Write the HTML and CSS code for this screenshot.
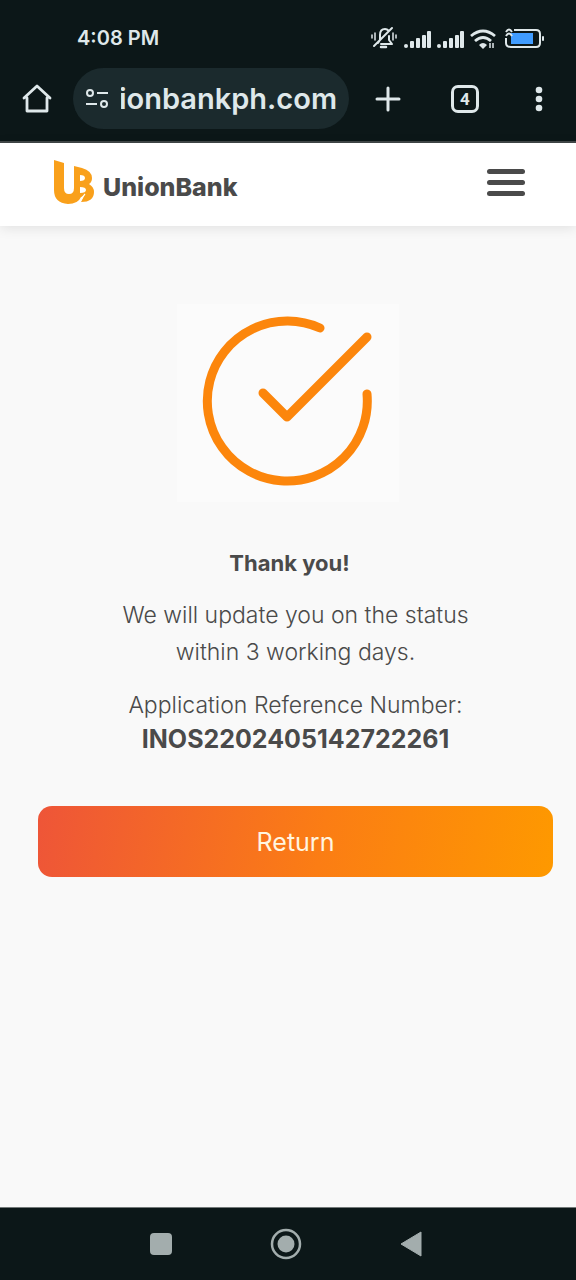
FILE: index.html
```html
<!DOCTYPE html>
<html lang="en">
<head>
<meta charset="utf-8">
<meta name="viewport" content="width=device-width, initial-scale=1">
<title>UnionBank</title>
<link rel="stylesheet" href="styles.css">
</head>
<body>
<div class="screen">
  <div class="system">
    <div class="status">
      <time class="clock">4:08 PM</time>
      <svg class="indicators" viewBox="0 0 176 24" aria-hidden="true">
        <g fill="none" stroke="currentColor" stroke-width="2" stroke-linecap="round" stroke-linejoin="round">
          <path d="M9 17l2-3V9c0-4 2-6 5-6 2 0 3 1 4 2M20 10v4l3 4H12M5 20L23 2"/>
          <path d="M12 21h5" stroke-width="2.500"/>
          <path d="M6 7v7M3 9v3M24 7v7M27 9v3" stroke-width="1.500"/>
        </g>
        <g fill="currentColor">
          <rect x="35" y="18" width="4" height="4" rx="2"/><rect x="41" y="15" width="4" height="7" rx="1"/><rect x="47" y="12" width="4" height="10" rx="1"/><rect x="53" y="9" width="4" height="13" rx="1"/><rect x="58" y="5" width="4" height="17" rx="1"/>
          <rect x="68" y="18" width="4" height="4" rx="2"/><rect x="74" y="15" width="4" height="7" rx="1"/><rect x="80" y="12" width="4" height="10" rx="1"/><rect x="86" y="9" width="4" height="13" rx="1"/><rect x="91" y="5" width="4" height="17" rx="1"/>
          <path d="M110 19q4-4 8 0l-4 4z"/>
        </g>
        <g fill="none" stroke="currentColor" stroke-width="2.800">
          <path d="M102 10q12-10 24 0M106 15q8-7 16 0"/>
          <path d="M121 17v5M124 17v5" stroke-width="1.500"/>
        </g>
        <rect x="142" y="7" width="22" height="11" fill="#409cff"/>
        <path d="M145 4h22q4 0 4 4v9q0 4-4 4h-25q-5 0-5-4v-5" fill="none" stroke="currentColor" stroke-width="2"/>
        <path d="M137 6q3-5 6 0M137 10q3-5 6 0" fill="none" stroke="currentColor" stroke-width="2"/>
        <rect x="173" y="10" width="2" height="5" rx="1" fill="currentColor"/>
      </svg>
    </div>
    <div class="toolbar">
      <button class="tool" type="button" aria-label="Home">
        <svg class="icon-home" viewBox="0 0 30 30"><path d="M5 14v13h20V14M2 14L15 2l13 12" fill="none" stroke="currentColor" stroke-width="2.800" stroke-linejoin="round" stroke-linecap="round"/></svg>
      </button>
      <div class="address">
        <svg class="icon-site" viewBox="0 0 24 20" aria-hidden="true"><g fill="none" stroke="currentColor" stroke-width="2"><circle cx="5" cy="4" r="3"/><circle cx="19" cy="15" r="3"/><path d="M12 4h11M1 15h11"/></g></svg>
        <input class="url" type="text" aria-label="Address" value="unionbankph.com">
      </div>
      <button class="tool" type="button" aria-label="New tab">
        <svg class="icon-plus" viewBox="0 0 26 26"><path d="M13 2v22M2 13h22" stroke="currentColor" stroke-width="3" stroke-linecap="round"/></svg>
      </button>
      <button class="tool tabs" type="button" aria-label="Tabs, 4 open"><span class="tab-count">4</span></button>
      <button class="tool" type="button" aria-label="More">
        <svg class="icon-more" viewBox="0 0 8 26"><g fill="currentColor"><circle cx="4" cy="4" r="3.300"/><circle cx="4" cy="13" r="3.300"/><circle cx="4" cy="22" r="3.300"/></g></svg>
      </button>
    </div>
  </div>

  <header class="site-header">
    <a class="brand" href="#">
      <svg class="brand-mark" viewBox="0 0 40 45" aria-hidden="true">
        <path fill="#f9a01b" d="M0 0l10 3v25q0 6 5 6t5-6V6l8 2q10 3 10 10 0 4-3 6 5 3 5 8 0 10-13 10l3-6-3 1Q24 44 14 44 0 43 0 30z"/>
        <path d="M26 15v6q5 0 5-3t-5-3zM26 27v6q6 0 6-3t-6-3z" fill="#fff"/>
        <path d="M31 34q-3 3-5 8" fill="none" stroke="#fff" stroke-width="1.200"/>
      </svg>
      <span class="brand-name">UnionBank</span>
    </a>
    <button class="menu" type="button" aria-label="Menu"><span class="bar"></span><span class="bar"></span><span class="bar"></span></button>
  </header>

  <main class="content">
    <div class="picture">
      <svg class="check" viewBox="0 0 222 198" role="img" aria-label="Submitted">
        <g fill="none" stroke="#fc860c" stroke-width="9" stroke-linecap="round" stroke-linejoin="round"><path d="M143 24A80 80 0 1 0 190 90"/><path d="M86 89L110 113 190 33"/></g>
      </svg>
    </div>
    <h1 class="title">Thank you!</h1>
    <p class="message">We will update you on the status<br>within 3 working days.</p>
    <p class="label">Application Reference Number:</p>
    <p class="reference">INOS2202405142722261</p>
    <button class="return" type="button">Return</button>
  </main>

  <nav class="navigation" aria-label="System">
    <button class="key" type="button" aria-label="Recent apps"><svg class="key-icon" viewBox="0 0 32 32"><rect x="5" y="5" width="22" height="22" rx="4" fill="currentColor"/></svg></button>
    <button class="key" type="button" aria-label="Home screen"><svg class="key-icon" viewBox="0 0 32 32"><circle cx="16" cy="16" r="14" fill="none" stroke="currentColor" stroke-width="2.500"/><circle cx="16" cy="16" r="8.500" fill="currentColor"/></svg></button>
    <button class="key" type="button" aria-label="Back"><svg class="key-icon" viewBox="0 0 32 32"><path d="M6 16L26 4v24z" fill="currentColor" stroke="currentColor" stroke-linejoin="round"/></svg></button>
  </nav>
</div>
</body>
</html>
```
FILE: styles.css
```css
* { box-sizing: border-box; }
body { margin: 0; background: #f9f9f9; color: #4a4a4a; font-family: Inter, "Open Sans", sans-serif; }
button { margin: 0; padding: 0; border: 0; background: none; color: inherit; font: inherit; cursor: pointer; }
svg { display: block; }
h1, p { margin: 0; }

.screen { display: flex; flex-direction: column; min-height: 100vh; }

.system { background: #0c1718; color: #dfe8ea; border-bottom: 2px solid #414748; padding-bottom: 12px; }
.status { display: flex; align-items: center; justify-content: space-between; height: 68px; padding: 8px 31px 0 77px; }
.clock { font-size: 20px; font-weight: 600; }
.indicators { width: 176px; height: 24px; }
.toolbar { display: flex; align-items: center; padding-left: 18px; padding-right: 18px; }
.tool { display: grid; place-items: center; flex: none; width: 38px; height: 48px; }
.address { display: flex; align-items: center; gap: 12px; flex: 1; min-width: 0; height: 61px; margin: 0 20px 0 17px; padding: 0 12px; border-radius: 31px; background: #1b2a2d; }
.icon-site { flex: none; width: 24px; height: 20px; }
.url { flex: 1; min-width: 0; width: 100%; height: 44px; padding: 0; border: 0; background: none; color: inherit; font-family: inherit; font-size: 29px; font-weight: 600; direction: rtl; }
.icon-home { width: 30px; height: 30px; }
.icon-plus { width: 26px; height: 26px; }
.icon-more { width: 8px; height: 26px; }
.tabs { margin: 0 36px 0 39px; }
.tab-count { display: grid; place-items: center; width: 28px; height: 28px; border: 3px solid; border-radius: 7px; font: bold 17px/20px Roboto, sans-serif; }

.site-header { display: flex; align-items: center; justify-content: space-between; height: 83px; padding: 0 51px 4px 54px; background: #fff; box-shadow: 0 2px 12px rgba(0, 0, 0, 0.1); }
.brand { display: flex; align-items: center; gap: 9px; color: #4a4a4a; text-decoration: none; }
.brand-mark { width: 40px; height: 45px; }
.brand-name { padding-top: 8px; font-size: 25px; line-height: 30px; font-weight: 800; }
.menu { display: flex; flex-direction: column; gap: 6px; width: 38px; }
.bar { height: 5px; border-radius: 3px; background: #4a4a4a; }

.content { display: flex; flex: 1; flex-direction: column; padding: 78px 23px 40px 38px; text-align: center; }
.picture { align-self: center; margin-right: 16px; background: #fbfbfb; }
.check { width: 222px; height: 198px; }
.title { margin: 46px 12px 0 0; font-size: 22px; line-height: 30px; font-weight: 700; }
.message { margin-top: 19px; font-size: 23px; line-height: 37px; font-weight: 300; }
.label { margin-top: 18px; font-size: 23px; line-height: 32px; font-weight: 300; }
.reference { font-size: 25px; line-height: 36px; font-weight: 700; }
.return { height: 71px; margin-top: 49px; border-radius: 14px; background: linear-gradient(100deg, #ee5538, #fb7d14 55%, #fe9900); color: #fff5e0; font-size: 25px; font-weight: 400; }

.navigation { display: flex; align-items: center; justify-content: center; gap: 93px; height: 73px; padding-right: 4px; border-top: 1px solid #737979; background: #0c1718; color: #a3adad; }
.key { width: 32px; height: 48px; }
.key-icon { width: 32px; height: 32px; }
```
